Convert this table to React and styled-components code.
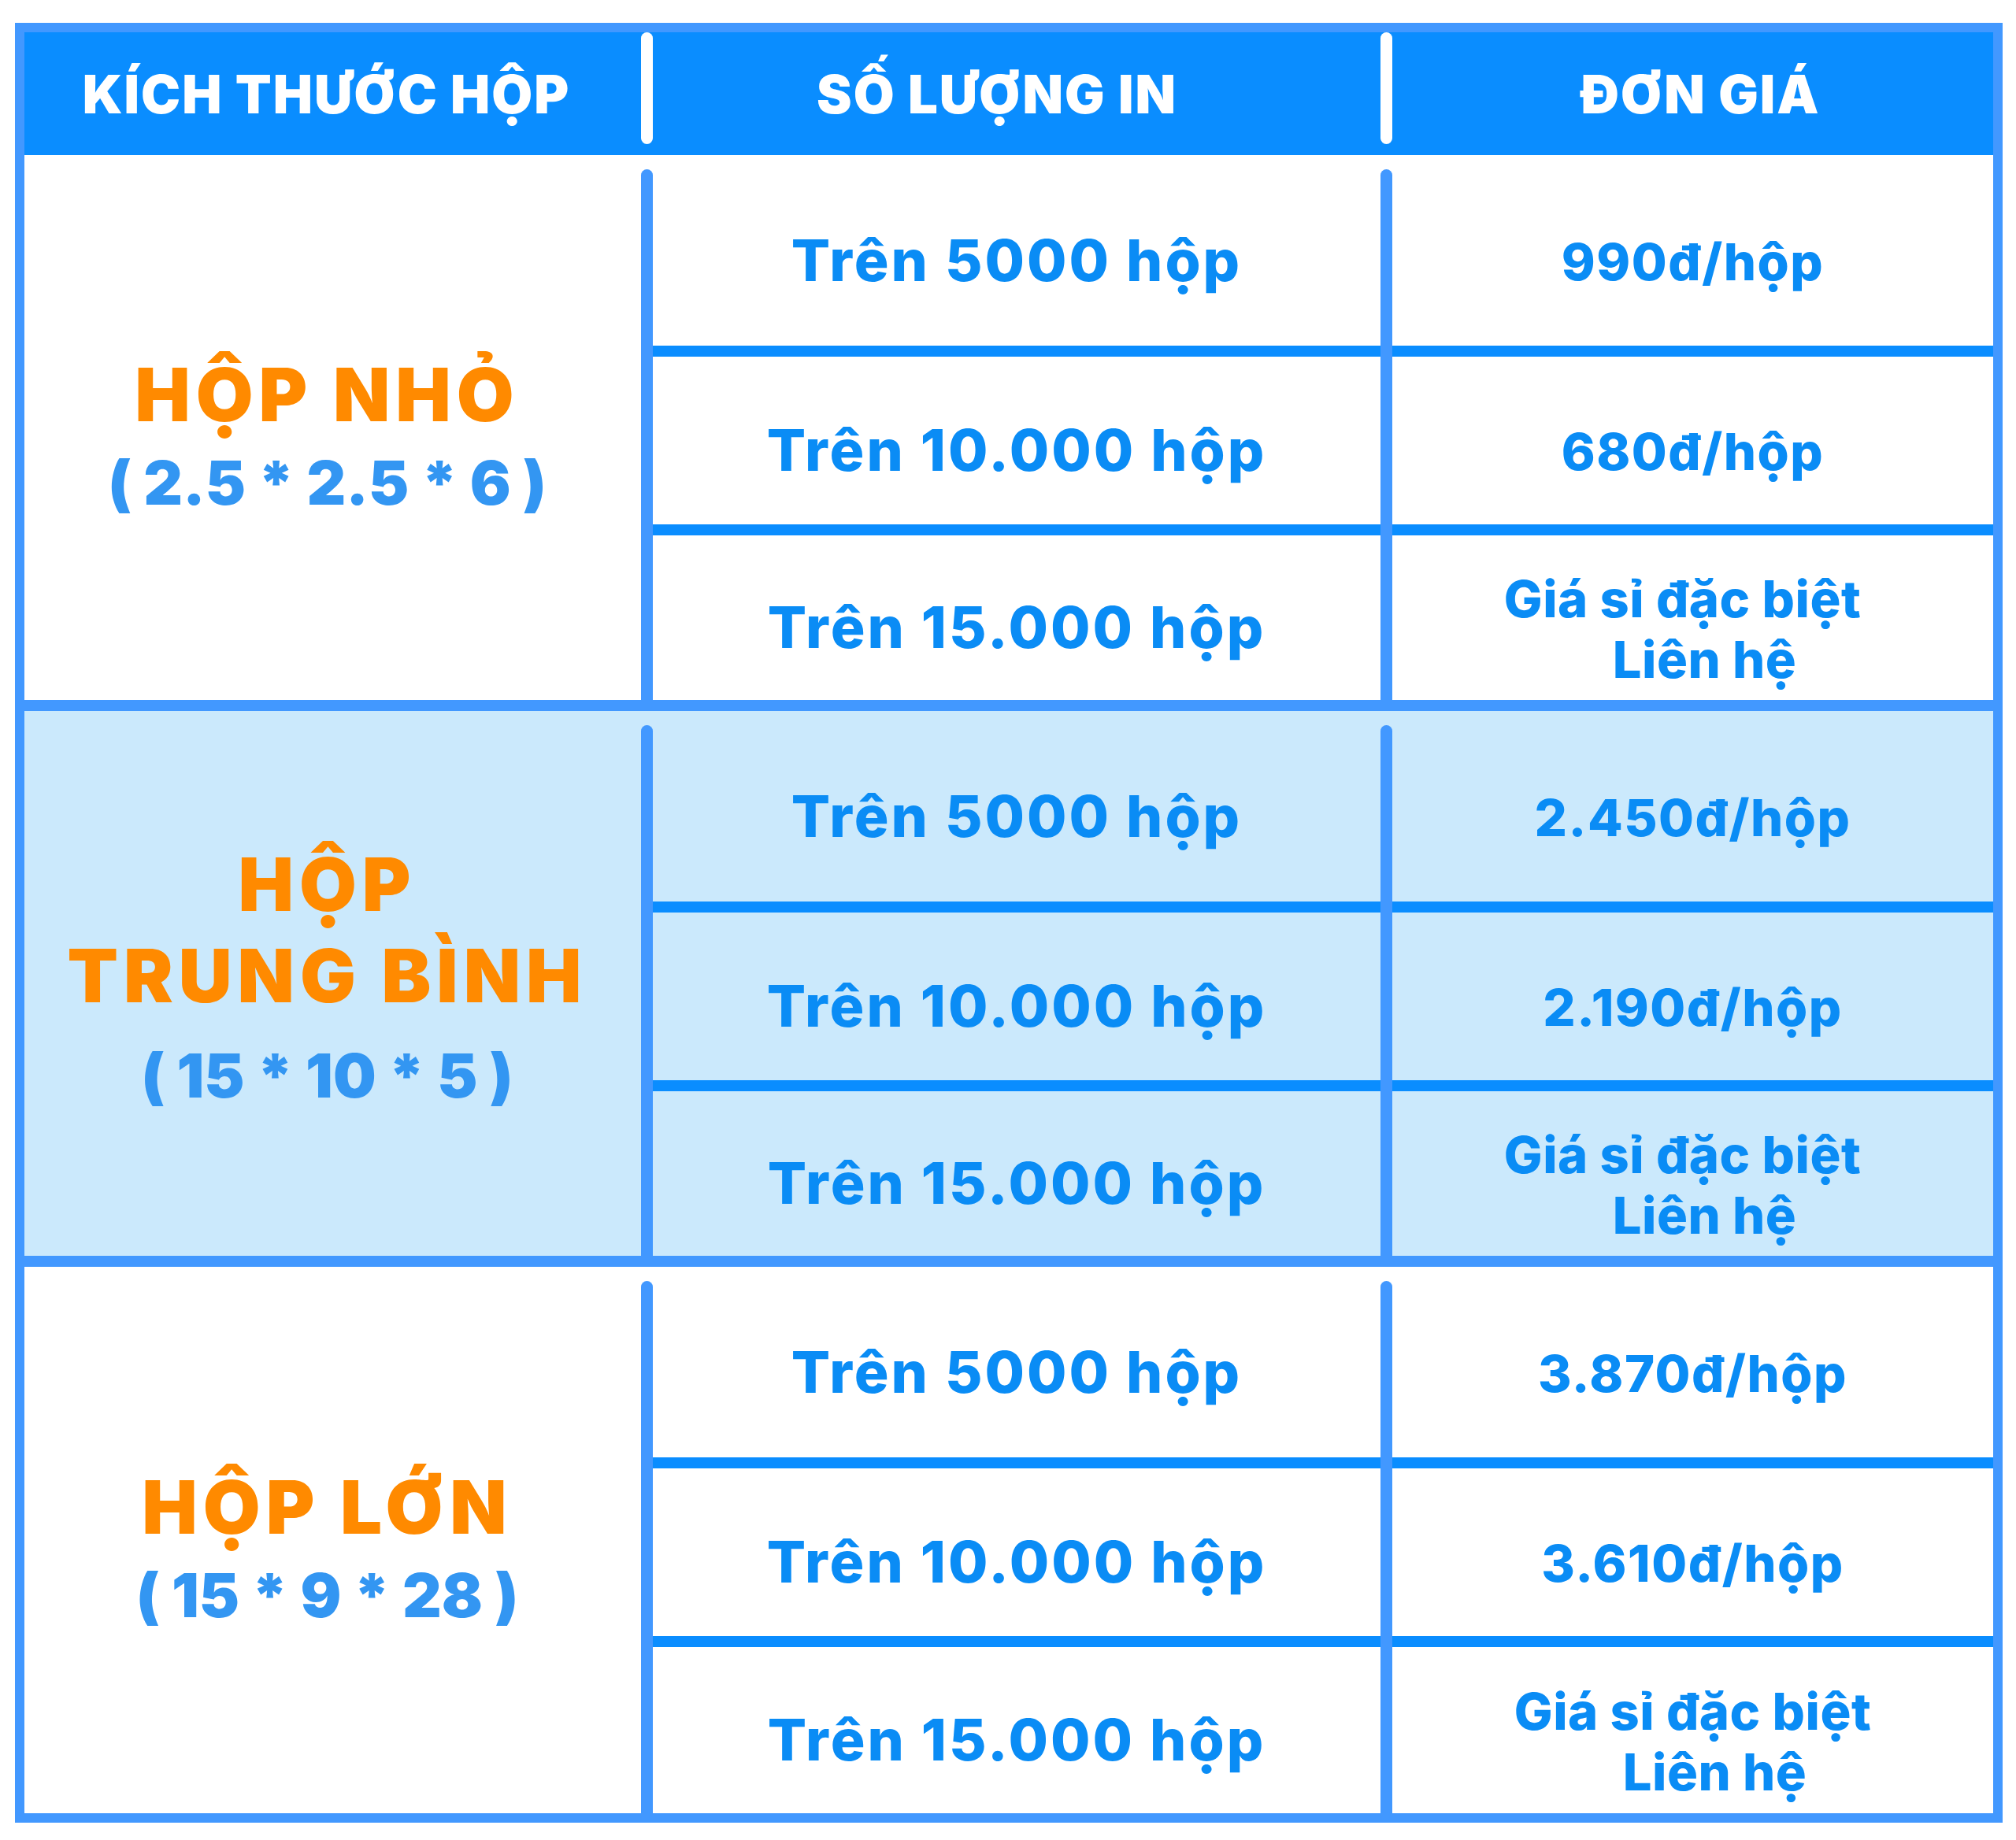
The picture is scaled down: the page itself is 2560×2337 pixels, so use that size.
import React from 'react';
import styled, { createGlobalStyle } from 'styled-components';

const GlobalStyle = createGlobalStyle`
    html, body {
        margin: 0;
        padding: 0;
        background: #ffffff;
    }
    body {
        font-family: Inter, "Noto Sans", sans-serif;
    }
`;

const FRAME = '#4298ff';
const DEEP = '#0a8dff';
const TEXT = '#0a8cf5';
const COLS = '783px 15px 924px 15px 763px';

const Frame = styled.div`
    width: 2524px;
    margin: 29px 0 22px 19px;
    border: 12px solid ${FRAME};
    box-sizing: border-box;
    background: #ffffff;
`;

const HeaderRow = styled.div`
    display: grid;
    grid-template-columns: ${COLS};
    height: 156px;
    background: ${DEEP};
`;

const HeadCell = styled.div`
    display: flex;
    align-items: center;
    justify-content: center;
    color: #ffffff;
    font-size: 67px;
    font-weight: 900;
    letter-spacing: 2px;
    padding-left: ${p => (p.$dx > 0 ? p.$dx * 2 : 0)}px;
    padding-right: ${p => (p.$dx < 0 ? -p.$dx * 2 : 0)}px;
`;

const HeadSep = styled.div`
    align-self: start;
    height: 142px;
    background: #ffffff;
    border-radius: 8px;
`;

const Section = styled.div`
    display: grid;
    grid-template-columns: ${COLS};
    grid-template-rows: 256px 227px 1fr;
    height: ${p => p.$h}px;
    background: ${p => (p.$tint ? '#cbe9fc' : '#ffffff')};
    border-top: ${p => (p.$first ? 'none' : `14px solid ${FRAME}`)};
`;

const LabelCell = styled.div`
    grid-column: 1;
    grid-row: 1 / 4;
    display: flex;
    flex-direction: column;
    align-items: center;
    justify-content: center;
    padding-top: ${p => p.$pt || 0}px;
    padding-bottom: ${p => p.$pb || 0}px;
    padding-right: 14px;
`;

const Title = styled.div`
    color: #ff8a00;
    font-size: 94px;
    font-weight: 900;
    letter-spacing: 7px;
    line-height: ${p => p.$lh}px;
    text-align: center;
`;

const Dim = styled.div`
    color: #3396f2;
    font-size: 77px;
    font-weight: 900;
    line-height: 112px;
    margin-top: ${p => p.$mt || 0}px;
    white-space: pre;
    font-feature-settings: 'calt' 0, 'case' 0;
`;

const BodySep = styled.div`
    grid-column: ${p => p.$col};
    grid-row: 1 / 4;
    margin-top: 18px;
    background: ${FRAME};
    border-radius: 8px 8px 0 0;
`;

const QtyCell = styled.div`
    grid-column: 3;
    display: flex;
    align-items: center;
    justify-content: center;
    padding-top: 24px;
    border-bottom: ${p => (p.$last ? 'none' : `14px solid ${DEEP}`)};
    color: ${TEXT};
    font-size: 73px;
    font-weight: 800;
    letter-spacing: 3px;
`;

const PriceCell = styled.div`
    grid-column: 5;
    display: flex;
    flex-direction: column;
    align-items: center;
    justify-content: center;
    padding-top: 28px;
    padding-right: ${p => p.$shift || 0}px;
    border-bottom: ${p => (p.$last ? 'none' : `14px solid ${DEEP}`)};
    color: ${TEXT};
    font-size: 65px;
    font-weight: 800;
    letter-spacing: ${p => (p.$multi ? 0.5 : 1.5)}px;
    line-height: 77px;
`;

const PriceLine = styled.span`
    display: block;
    padding-left: ${p => (p.$indent ? 56 : 0)}px;
`;

const quantities = ['Trên 5000 hộp', 'Trên 10.000 hộp', 'Trên 15.000 hộp'];
const special = ['Giá sỉ đặc biệt', 'Liên hệ'];

const sections = [
    {
        title: ['HỘP NHỎ'],
        dim: '( 2.5 * 2.5 * 6 )',
        prices: [['990đ/hộp'], ['680đ/hộp'], special],
        h: 692,
        lh: 112,
        pt: 28,
        shift: 26,
    },
    {
        title: ['HỘP', 'TRUNG BÌNH'],
        dim: '( 15 * 10 * 5 )',
        prices: [['2.450đ/hộp'], ['2.190đ/hộp'], special],
        h: 692,
        lh: 116,
        pb: 12,
        mt: 13,
        tint: true,
        shift: 26,
    },
    {
        title: ['HỘP LỚN'],
        dim: '( 15 * 9 * 28 )',
        prices: [['3.870đ/hộp'], ['3.610đ/hộp'], special],
        h: 694,
        lh: 112,
        pt: 28,
        shift: 0,
    },
];

export default function App() {
    return (
        <>
            <GlobalStyle />
            <Frame>
                <HeaderRow>
                    <HeadCell $dx={-8}>KÍCH THƯỚC HỘP</HeadCell>
                    <HeadSep />
                    <HeadCell $dx={-25}>SỐ LƯỢNG IN</HeadCell>
                    <HeadSep />
                    <HeadCell $dx={10}>ĐƠN GIÁ</HeadCell>
                </HeaderRow>
                {sections.map((s, i) => (
                    <Section key={i} $h={s.h} $tint={s.tint} $first={i === 0}>
                        <LabelCell $pt={s.pt} $pb={s.pb}>
                            <Title $lh={s.lh}>
                                {s.title.map(t => (
                                    <div key={t}>{t}</div>
                                ))}
                            </Title>
                            <Dim $mt={s.mt}>{s.dim}</Dim>
                        </LabelCell>
                        <BodySep $col={2} />
                        <BodySep $col={4} />
                        {quantities.map((q, r) => (
                            <QtyCell key={q} $last={r === 2} style={{ gridRow: r + 1 }}>
                                {q}
                            </QtyCell>
                        ))}
                        {s.prices.map((lines, r) => (
                            <PriceCell
                                key={r}
                                $last={r === 2}
                                $multi={lines.length > 1}
                                $shift={lines.length > 1 ? s.shift : 0}
                                style={{ gridRow: r + 1 }}
                            >
                                {lines.map((l, k) => (
                                    <PriceLine key={l} $indent={k > 0}>
                                        {l}
                                    </PriceLine>
                                ))}
                            </PriceCell>
                        ))}
                    </Section>
                ))}
            </Frame>
        </>
    );
}
